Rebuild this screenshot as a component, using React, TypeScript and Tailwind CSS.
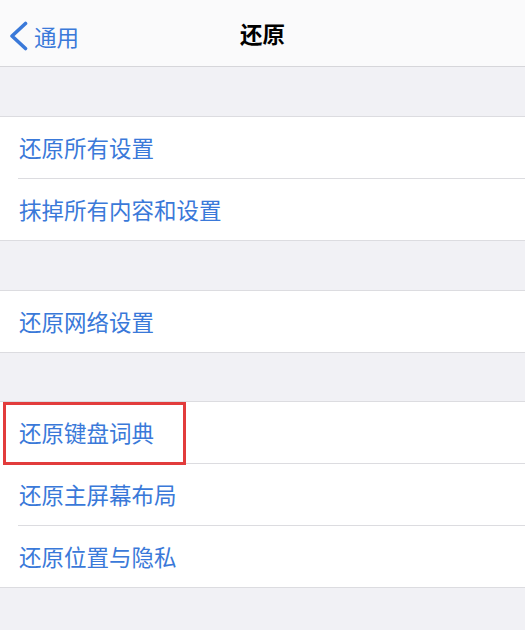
import React from "react";

const font = { fontFamily: '"Noto Sans CJK SC", "Noto Sans", sans-serif' };

function Row({ text, sep, highlight }: { text: string; sep?: boolean; highlight?: boolean }) {
  return (
    <div className="relative">
      <div className="h-[61px] flex items-center pl-[19px] text-[22.5px] text-[#3a79d9] leading-none">
        {text}
      </div>
      {highlight && (
        <div className="absolute left-[3px] top-0 w-[183px] h-[63px] border-[3px] border-[#e23c3c]" />
      )}
      {sep && <div className="ml-[18px] h-px bg-[#dcdce0]" />}
    </div>
  );
}

function Group({ items, highlightIndex }: { items: string[]; highlightIndex?: number }) {
  return (
    <div className="bg-white border-y border-[#dcdce0]">
      {items.map((t, i) => (
        <Row key={t} text={t} sep={i < items.length - 1} highlight={i === highlightIndex} />
      ))}
    </div>
  );
}

export default function App() {
  return (
    <div className="w-[525px] h-[630px] bg-[#f1f1f5] overflow-hidden" style={font}>
      <div className="h-[67px] bg-[#fafafb] border-b border-[#d6d6da] relative flex items-center justify-center">
        <div className="absolute left-[8px] top-[21px] flex items-center">
          <svg width="21" height="30" viewBox="0 0 21 30">
            <path d="M17.5 2.5 L4 15 L17.5 27.5" fill="none" stroke="#3a79d9" strokeWidth="3.6" strokeLinecap="round" strokeLinejoin="round" />
          </svg>
          <span className="ml-[5px] text-[22.5px] text-[#3a79d9] leading-none">通用</span>
        </div>
        <span className="text-[22.5px] font-semibold text-black leading-none">还原</span>
      </div>
      <div className="h-[49px]" />
      <Group items={["还原所有设置", "抹掉所有内容和设置"]} />
      <div className="h-[49px]" />
      <Group items={["还原网络设置"]} />
      <div className="h-[48px]" />
      <Group items={["还原键盘词典", "还原主屏幕布局", "还原位置与隐私"]} highlightIndex={0} />
    </div>
  );
}
